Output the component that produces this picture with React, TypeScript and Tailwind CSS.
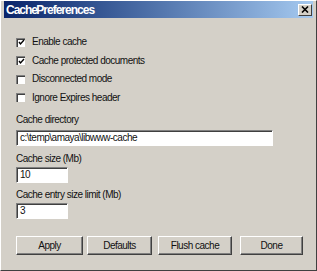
import React from "react"

const font = { fontFamily: '"Liberation Sans", Arial, sans-serif' }

function CheckRow({ label, checked }: { label: string; checked: boolean }) {
    return (
        <div className="h-[18.5px] flex items-center">
            <div className="w-[9px] h-[9px] bg-white border-t border-l border-[#808080] shadow-[inset_1px_1px_0_#404040] flex items-center justify-center">
                {checked && (
                    <svg width="7" height="7" viewBox="0 0 7 7">
                        <path d="M1 3 L2.5 5 L6 1" stroke="#000" strokeWidth="1.4" fill="none" />
                    </svg>
                )}
            </div>
            <span className="ml-[7px] text-[10px] tracking-[-0.5px] text-[#111] leading-none">{label}</span>
        </div>
    )
}

function Field({ value, width }: { value: string; width: string }) {
    return (
        <div className={`${width} h-[16px] bg-white border-t border-l border-[#808080] border-r border-b border-r-white border-b-white shadow-[inset_1px_1px_0_#404040] flex items-center pl-[3px]`}>
            <span className="text-[10px] tracking-[-0.5px] text-[#111] leading-none">{value}</span>
        </div>
    )
}

function Button({ label, className }: { label: string; className: string }) {
    return (
        <button className={`${className} h-[19px] bg-[#d4d0c8] border-t border-l border-white border-r border-b border-r-[#404040] border-b-[#404040] shadow-[inset_-1px_-1px_0_#808080] flex items-center justify-center text-[10px] tracking-[-0.5px] text-[#111] leading-none`}>
            {label}
        </button>
    )
}

export default function App() {
    return (
        <div style={font} className="w-[317px] h-[271px] bg-[#d4d0c8] border-t border-l border-white border-r border-b border-r-[#404040] border-b-[#404040] flex flex-col">
            <div className="mx-[3px] h-[17px] bg-gradient-to-r from-[#0a246a] to-[#a6caf0] flex items-center justify-between pl-[2px] pr-[1px]">
                <span className="text-white font-bold text-[12px] tracking-[-1px] [word-spacing:-3px] leading-none">Cache Preferences</span>
                <div className="w-[14px] h-[12px] bg-[#d4d0c8] border-t border-l border-white border-r border-b border-r-[#404040] border-b-[#404040] flex items-center justify-center">
                    <svg width="8" height="7" viewBox="0 0 8 7">
                        <path d="M1 0.5 L7 6.5 M7 0.5 L1 6.5" stroke="#000" strokeWidth="1.6" />
                    </svg>
                </div>
            </div>

            <div className="pl-[15px] pt-[15px] flex flex-col">
                <CheckRow label="Enable cache" checked />
                <CheckRow label="Cache protected documents" checked />
                <CheckRow label="Disconnected mode" checked={false} />
                <CheckRow label="Ignore Expires header" checked={false} />

                <p className="mt-[8px] text-[10px] tracking-[-0.5px] leading-none text-[#111]">Cache directory</p>
                <div className="mt-[5px]">
                    <Field value="c:\temp\amaya\libwww-cache" width="w-[257px]" />
                </div>
                <p className="mt-[8px] text-[10px] tracking-[-0.5px] leading-none text-[#111]">Cache size (Mb)</p>
                <div className="mt-[3px]">
                    <Field value="10" width="w-[52px]" />
                </div>
                <p className="mt-[7px] text-[10px] tracking-[-0.5px] leading-none text-[#111]">Cache entry size limit (Mb)</p>
                <div className="mt-[3px]">
                    <Field value="3" width="w-[52px]" />
                </div>

                <div className="mt-[17px] flex">
                    <Button label="Apply" className="w-[67px]" />
                    <Button label="Defaults" className="ml-[4px] w-[65px]" />
                    <Button label="Flush cache" className="ml-[6px] w-[74px]" />
                    <Button label="Done" className="ml-[8px] w-[63px]" />
                </div>
            </div>
        </div>
    )
}
